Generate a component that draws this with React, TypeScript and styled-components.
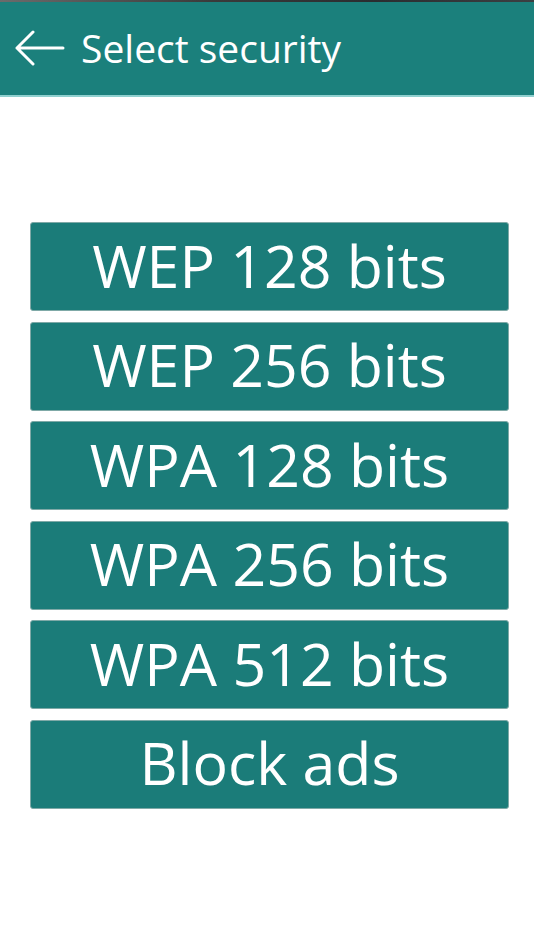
import React from 'react';
import styled, { createGlobalStyle } from 'styled-components';

const GlobalStyle = createGlobalStyle`
  html, body {
    margin: 0;
    padding: 0;
    background: #ffffff;
  }
  body {
    font-family: "Open Sans", "Noto Sans", "DejaVu Sans", sans-serif;
  }
`;

const Screen = styled.div`
  width: 534px;
  min-height: 950px;
  background: #ffffff;
  display: flex;
  flex-direction: column;
`;

const StatusStrip = styled.div`
  height: 2px;
  background: linear-gradient(90deg, #6b6b6b 0%, #3a3a3a 40%, #2a2d30 70%, #3c3f42 100%);
`;

const Header = styled.header`
  height: 95px;
  background: #1b807c;
  border-bottom: 2px solid #8fd0cf;
  display: flex;
  align-items: center;
  gap: 16px;
  padding: 0 0 2px 15px;
  box-sizing: border-box;
`;

const Title = styled.h1`
  margin: 0;
  color: #ffffff;
  font-weight: 400;
  font-size: 39px;
`;

const List = styled.div`
  display: flex;
  flex-direction: column;
  gap: 10.6px;
  padding: 125px 25px 0 30px;
`;

type OptionProps = {
  $height?: number;
};

const Option = styled.button<OptionProps>`
  height: ${(p) => p.$height ?? 89}px;
  width: 100%;
  background: #1b7c79;
  border: 1px solid #7fa9a7;
  border-radius: 3px;
  color: #ffffff;
  font-family: "Open Sans", "Noto Sans", sans-serif;
  font-size: 59px;
  font-weight: 400;
  display: flex;
  align-items: center;
  justify-content: center;
  padding: 0 0 4px;
  cursor: pointer;
`;

const BackArrow = () => (
  <svg width="50" height="36" viewBox="0 0 50 36" fill="none">
    <path
      d="M2 18H48M18 2L2 18L18 34"
      stroke="#ffffff"
      strokeWidth="3"
      strokeLinecap="round"
      strokeLinejoin="round"
    />
  </svg>
);

const options = [
  'WEP 128 bits',
  'WEP 256 bits',
  'WPA 128 bits',
  'WPA 256 bits',
  'WPA 512 bits',
  'Block ads',
];

const App = () => {
  return (
    <>
      <GlobalStyle />
      <Screen>
        <StatusStrip />
        <Header>
          <BackArrow />
          <Title>Select security</Title>
        </Header>
        <List>
          {options.map((o) => (
            <Option key={o}>{o}</Option>
          ))}
        </List>
      </Screen>
    </>
  );
};

export default App;
